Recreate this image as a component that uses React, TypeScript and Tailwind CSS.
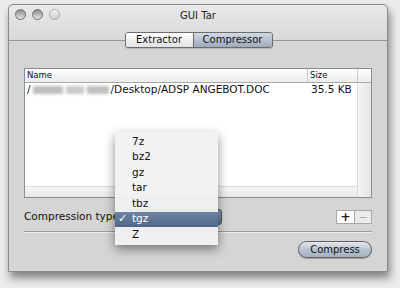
import * as React from 'react'

const FONT = { fontFamily: '"DejaVu Sans", "Liberation Sans", sans-serif' }

const formats = ['7z', 'bz2', 'gz', 'tar', 'tbz', 'tgz', 'Z']

function Light({ dim }: { dim?: boolean }) {
  return (
    <div
      className={
        dim
          ? 'h-[11px] w-[11px] rounded-full border border-[#a9a9a9] bg-gradient-to-b from-[#f2f2f2] to-[#cfcfcf]'
          : 'h-[11px] w-[11px] rounded-full border border-[#6f6f6f] bg-gradient-to-b from-[#8e8e8e] via-[#b8b8b8] to-[#e6e6e6]'
      }
    />
  )
}

function FileList() {
  return (
    <div className="flex h-[130px] w-[348px] flex-col border border-[#8c8c8c] bg-white">
      {/* header */}
      <div className="flex h-[14px] shrink-0 border-b border-[#a8a8a8] bg-gradient-to-b from-white to-[#ececec] text-[8.5px] leading-[13px] text-[#111]">
        <div className="w-[283px] border-r border-[#c8c8c8] pl-[2px]">Name</div>
        <div className="w-[50px] border-r border-[#c8c8c8] pl-[2px]">Size</div>
        <div className="flex-1" />
      </div>
      <div className="flex flex-1">
        <div className="flex flex-1 flex-col">
          <div className="flex h-[14px] items-center text-[10.5px] text-[#111]">
            <div className="flex w-[285px] items-center pl-[2px]">
              <span>/</span>
              <span className="mx-[2px] flex h-[8px] items-center gap-[3px] blur-[1.5px]">
                <span className="h-[8px] w-[30px] bg-[#bdbdbd]" />
                <span className="h-[8px] w-[18px] bg-[#c9c9c9]" />
                <span className="h-[8px] w-[22px] bg-[#bfbfbf]" />
              </span>
              <span>/Desktop/ADSP ANGEBOT.DOC</span>
            </div>
            <div className="pl-[1px]">35.5 KB</div>
          </div>
          <div className="flex-1" />
          <div className="h-[11px] border-t border-[#dcdcdc] bg-gradient-to-b from-[#f6f6f6] to-[#e8e8e8]" />
        </div>
        <div className="w-[14px] border-l border-[#dcdcdc] bg-gradient-to-r from-[#f4f4f4] to-[#e6e6e6]" />
      </div>
    </div>
  )
}

function Menu() {
  return (
    <div className="absolute left-[115px] top-[132px] z-20 w-[103px] bg-[#f1f1f1]/95 pb-[2.5px] pt-[2px] text-[10.5px] text-[#111] shadow-[0_4px_10px_rgba(0,0,0,0.45)]">
      {formats.map((f) => {
        const sel = f === 'tgz'
        return (
          <div
            key={f}
            className={
              sel
                ? 'flex h-[15.5px] items-center bg-gradient-to-b from-[#6d84a6] to-[#4f6789] text-white'
                : 'flex h-[15.5px] items-center'
            }
          >
            <span className="w-[17px] pl-[3px] text-[11px]">{sel ? '✓' : ''}</span>
            <span>{f}</span>
          </div>
        )
      })}
    </div>
  )
}

export default function App() {
  return (
    <div className="relative h-[288px] w-[400px] overflow-hidden bg-[#ececec] pl-[8px] pt-[4px]" style={FONT}>
      <div className="flex h-[268px] w-[380px] flex-col rounded-t-[5px] border border-[#8a8a8a] bg-[#d5d5d5] shadow-[2px_6px_8px_rgba(0,0,0,0.45)]">
        {/* title bar */}
        <div className="relative flex h-[36px] shrink-0 items-start rounded-t-[5px] border-b border-[#979797] bg-gradient-to-b from-[#e9e9e9] to-[#d9d9d9]">
          <div className="flex gap-[6px] pl-[6px] pt-[4px]">
            <Light />
            <Light />
            <Light dim />
          </div>
          <div className="absolute inset-x-0 top-[3px] text-center text-[10px] text-[#222]">GUI Tar</div>
        </div>
        {/* segmented control */}
        <div className="relative z-10 -mt-[9px] flex justify-center pl-[1px]">
          <div className="flex h-[16px] overflow-hidden rounded-[3px] border border-[#6c6c6c] text-[10px] leading-[14px] text-[#111] shadow-[0_1px_1px_rgba(0,0,0,0.15)]">
            <div className="w-[67px] bg-gradient-to-b from-white to-[#e2e2e2] text-center">Extractor</div>
            <div className="w-[79px] border-l border-[#6c6c6c] bg-gradient-to-b from-[#d2dae4] to-[#9eabbd] text-center">Compressor</div>
          </div>
        </div>
        {/* content */}
        <div className="flex flex-col px-[15px] pt-[20px]">
          <FileList />
          <div className="mt-[11px] flex h-[16px] items-center">
            <span className="text-[10.5px] text-[#111]">Compression type</span>
            <div className="ml-[3px] h-[16px] w-[100px] rounded-[3px] border border-[#555] bg-gradient-to-b from-[#8ea0b8] to-[#5d7291]" />
            <div className="flex-1" />
            <div className="flex h-[14px] border border-[#a8a8a8]">
              <div className="flex w-[17px] items-center justify-center bg-white text-[12px] font-bold leading-none text-[#222]">+</div>
              <div className="flex w-[17px] items-center justify-center border-l border-[#a8a8a8] bg-[#ebebeb] text-[11px] leading-none text-[#aaa]">−</div>
            </div>
          </div>
          <div className="mt-[6px] h-[1px] bg-[#9d9d9d] shadow-[0_1px_0_#ececec]" />
          <div className="mt-[9px] flex justify-end">
            <div className="flex h-[17px] w-[74px] items-center justify-center rounded-full border border-[#5f5f5f] bg-gradient-to-b from-[#e4e9ef] via-[#b8c3d0] to-[#a6b2c1] text-[10px] text-[#111] shadow-[0_1px_1px_rgba(0,0,0,0.25)]">
              Compress
            </div>
          </div>
        </div>
      </div>
      <Menu />
    </div>
  )
}
